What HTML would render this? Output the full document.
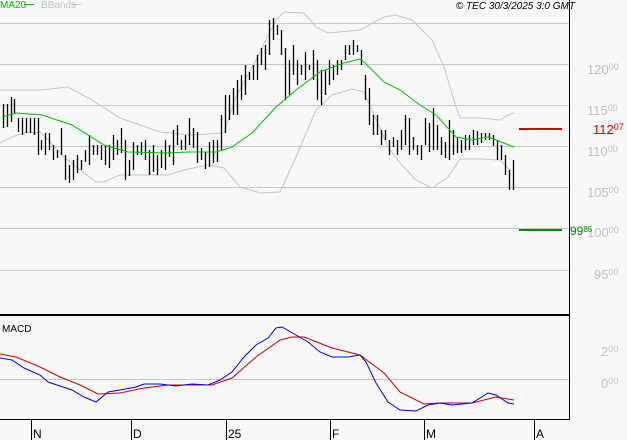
<!DOCTYPE html>
<html><head><meta charset="utf-8"><style>
html,body{margin:0;padding:0;background:#f8f8f8;}
svg{display:block;font-family:"Liberation Sans",sans-serif;}
</style></head><body>
<svg width="627" height="440" viewBox="0 0 627 440" xmlns="http://www.w3.org/2000/svg">
<rect width="627" height="440" fill="#f8f8f8"/>
<g stroke="#c8c8c8" stroke-width="1">
<line x1="0" y1="23.5" x2="569" y2="23.5"/>
<line x1="0" y1="64.5" x2="569" y2="64.5"/>
<line x1="0" y1="105.5" x2="569" y2="105.5"/>
<line x1="0" y1="146.5" x2="569" y2="146.5"/>
<line x1="0" y1="187.5" x2="569" y2="187.5"/>
<line x1="0" y1="228.5" x2="569" y2="228.5"/>
<line x1="0" y1="270.5" x2="569" y2="270.5"/>
<line x1="0" y1="379.5" x2="569" y2="379.5"/>
</g>
<g fill="none" stroke="#c4c4c4" stroke-width="1">
<polyline points="0,90 40,90 68,87 92,100 120,118 160,132 192,135 224,133 236,97 256,60 276,20 284,12 304,13 316,27 328,33 360,30 384,17 396,15 412,20 432,40 444,67 456,107 460,118 480,118 500,120 506,116 514,113"/>
<polyline points="0,143 12,137 24,133 40,132 48,140 64,157 80,170 96,182 104,182 120,175 144,175 168,175 184,170 208,165 224,168 240,187 260,193 280,192 296,157 316,110 332,95 352,89 364,92 372,110 388,147 400,163 416,180 432,188 448,177 460,159 480,159 500,160 510,170"/>
</g>
<path fill="none" stroke="#000" stroke-width="1.3" d="
M3.5 104V128M7.5 104V127M11.5 97V122M14.5 99V114M18.5 118V132M22.5 118V135M26.5 118V133M30.5 118V133M34.5 118V135M38.5 118V155M41.5 140V150M45.5 133V155M49.5 133V150M53.5 145V160M57.5 150V158M61.5 128V155M65.5 155V180M69.5 165V183M73.5 160V180M77.5 155V173M81.5 160V170M85.5 150V162M89.5 135V165M93.5 145V155M97.5 145V155M101.5 145V160M105.5 145V165M109.5 145V168M113.5 135V160M117.5 140V155M121.5 128V153M125.5 140V180M129.5 160V176M133.5 142V170M137.5 145V155M141.5 142V155M145.5 140V160M149.5 150V175M153.5 145V172M157.5 155V175M161.5 150V168M165.5 140V170M169.5 145V157M173.5 130V165M177.5 125V145M181.5 140V150M185.5 135V150M189.5 118V145M193.5 128V148M197.5 132V163M201.5 148V160M205.5 152V169M209.5 142V167M213.5 140V163M217.5 140V162M221.5 115V150M225.5 95V133M229.5 95V120M233.5 88V115M237.5 80V115M241.5 75V100M245.5 65V95M249.5 72V80M253.5 65V80M257.5 55V80M261.5 48V65M265.5 45V70M269.5 20V55M273.5 18V40M277.5 25V35M281.5 30V55M285.5 48V100M289.5 60V95M293.5 45V75M297.5 60V85M301.5 65V75M305.5 52V80M309.5 65V70M313.5 50V80M317.5 60V100M321.5 70V105M325.5 70V95M329.5 60V85M333.5 65V80M337.5 60V75M341.5 60V70M345.5 45V60M349.5 45V55M353.5 40V55M357.5 45V52M361.5 50V65M365.5 75V100M369.5 88V125M373.5 115V135M377.5 115V135M381.5 130V145M385.5 130V140M389.5 140V155M393.5 137V147M397.5 140V155M401.5 130V150M405.5 115V145M409.5 118V155M413.5 137V150M417.5 145V155M421.5 145V160M425.5 118V145M429.5 123V152M433.5 108V150M437.5 125V150M441.5 137V155M445.5 142V158M449.5 120V160M453.5 130V155M457.5 137V153M461.5 140V153M465.5 135V150M469.5 135V150M473.5 130V145M477.5 131V145M481.5 133V143M485.5 133V140M489.5 133V140M493.5 135V146M497.5 140V160M501.5 145V160M505.5 155V175M509.5 170V190M513.5 160V190"/>
<polyline fill="none" stroke="#00c000" stroke-width="1" points="2,117 16,113 42,115 72,125 104,145 128,152 168,153 188,152 216,152 232,147 252,133 276,107 296,90 320,72 344,63 360,59 364,62 384,82 400,90 420,105 436,115 456,137 472,140 488,137 496,140 514,147"/>
<rect x="519" y="128" width="43" height="2" fill="#cc0000"/>
<rect x="519" y="229" width="43" height="2" fill="#008800"/>
<line x1="569.5" y1="0" x2="569.5" y2="420" stroke="#000" stroke-width="1"/>
<rect x="0" y="314" width="569" height="2" fill="#000"/>
<line x1="0" y1="419.5" x2="569" y2="419.5" stroke="#000" stroke-width="1"/>
<polyline fill="none" stroke="#cc0000" stroke-width="1" points="0,354 16,357 40,367 60,377 80,385 98,394 120,393 144,388 168,385 212,385 232,378 256,357 280,340 292,337 304,337 332,348 360,355 384,373 400,392 424,404 440,403 472,403 496,397 514,400"/>
<polyline fill="none" stroke="#0000dd" stroke-width="1" points="0,358 12,360 24,368 40,375 48,382 60,386 72,390 84,397 96,402 108,392 120,390 136,387 144,384 160,384 176,386 192,384 208,385 220,380 232,372 244,357 256,345 268,338 276,328 282,327 296,335 308,342 320,352 332,357 348,357 360,355 366,362 376,383 388,402 400,410 416,411 428,405 440,403 452,405 472,403 488,393 496,395 508,403 514,404"/>
<g stroke="#000" stroke-width="1">
<line x1="31.5" y1="419" x2="31.5" y2="440"/>
<line x1="131.5" y1="419" x2="131.5" y2="440"/>
<line x1="226.5" y1="419" x2="226.5" y2="440"/>
<line x1="330.5" y1="419" x2="330.5" y2="440"/>
<line x1="424.5" y1="419" x2="424.5" y2="440"/>
<line x1="534.5" y1="419" x2="534.5" y2="440"/>
</g>
<g font-size="12" fill="#000">
<text x="33" y="438">N</text><text x="133" y="438">D</text><text x="228" y="438">25</text>
<text x="332" y="438">F</text><text x="426" y="438">M</text><text x="536" y="438">A</text>
</g>
<text x="2" y="332" font-size="10" fill="#000">MACD</text>
<g font-size="13" fill="#c0c0c0">
<text x="587" y="74">120<tspan font-size="9" dy="-4">00</tspan></text>
<text x="587" y="115">115<tspan font-size="9" dy="-4">00</tspan></text>
<text x="587" y="156">110<tspan font-size="9" dy="-4">00</tspan></text>
<text x="587" y="197">105<tspan font-size="9" dy="-4">00</tspan></text>
<text x="587" y="237">100<tspan font-size="9" dy="-4">00</tspan></text>
<text x="594" y="279">95<tspan font-size="9" dy="-4">00</tspan></text>
<text x="601" y="356">2<tspan font-size="9" dy="-4">00</tspan></text>
<text x="601" y="388">0<tspan font-size="9" dy="-4">00</tspan></text>
</g>
<text x="593" y="134" font-size="13" fill="#cc0000">112<tspan font-size="9" dy="-4">07</tspan></text>
<text x="570" y="235" font-size="12" fill="#008800">99<tspan font-size="8" dy="-3">85</tspan></text>
<text x="0" y="8" font-size="10" fill="#00bb00">MA20</text>
<line x1="24" y1="4.5" x2="34" y2="4.5" stroke="#00bb00"/>
<text x="41" y="8" font-size="10" fill="#c0c0c0">BBands</text>
<line x1="71" y1="4.5" x2="81" y2="4.5" stroke="#c0c0c0"/>
<text x="575" y="9" font-size="10" font-style="italic" fill="#000" text-anchor="end">© TEC 30/3/2025 3:0 GMT</text>
</svg>
</body></html>
